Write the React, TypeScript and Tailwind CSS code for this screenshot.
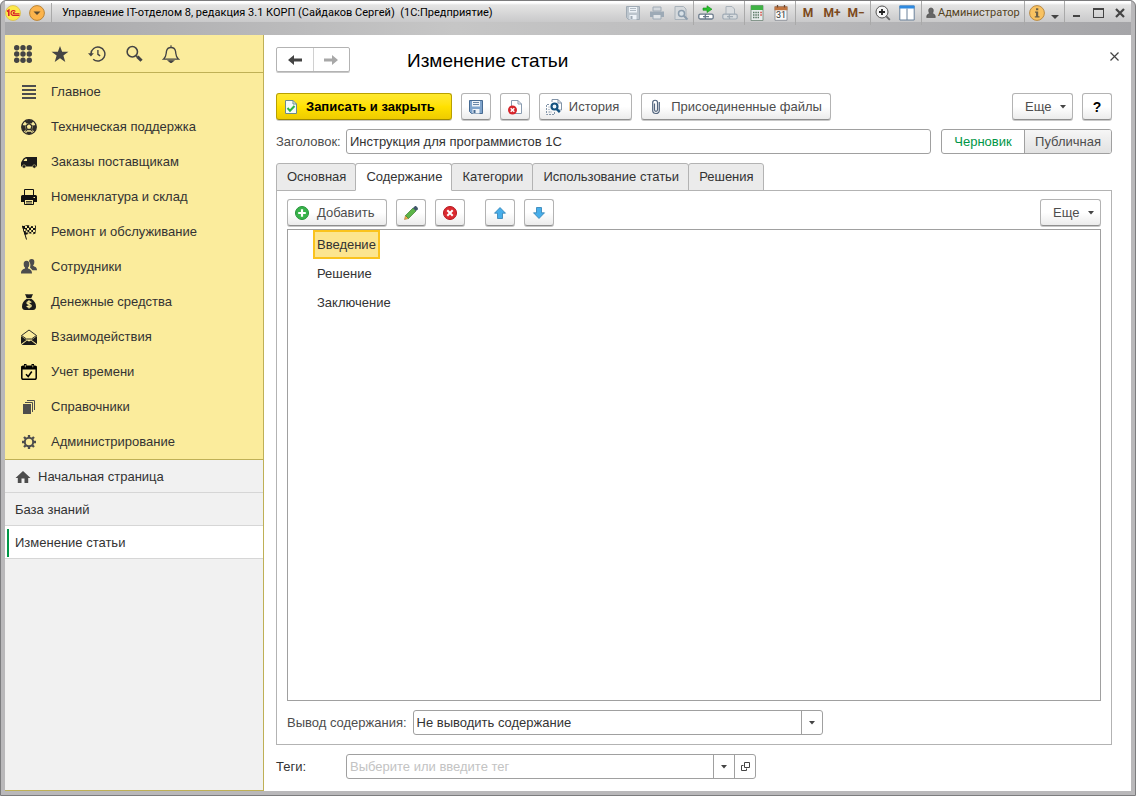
import { useState } from "react";
import clsx from "clsx";

const Svg = ({ children, size = 16, className = "" }: any) => (
  <svg
    width={size}
    height={size}
    viewBox="0 0 16 16"
    className={clsx("shrink-0", className)}
    aria-hidden="true"
  >
    {children}
  </svg>
);

/* sidebar icons */
const MenuIcon = () => (
  <Svg>
    <path d="M1 1h14v2H1zM1 5h14v2H1zM1 9h14v2H1zM1 13h14v2H1z" fill="#4d4d4d" />
  </Svg>
);
const BallIcon = () => (
  <Svg>
    <circle cx="8" cy="8" r="7.3" fill="#f6e89a" stroke="#2e2b28" strokeWidth="1.3" />
    <path d="M8 .8a7.2 7.2 0 0 1 4.3 1.5L10.500 4.600h-5L3.700 2.300A7.200 7.200 0 0 1 8 .8z" fill="#2e2b28" />
    <path d="M1 6l3 .5 1 4-2.500 2.300C1 11 .5 9 1 6zM15 6l-3 .5-1 4 2.500 2.300c1.500-1.800 2-3.800 1.500-6.800zM6 12.800h4l1 1.800c-2 1-4 1-6 0z" fill="#2e2b28" />
    <path d="M8 4.500l3 2.300-1.100 3.700H6.100L5 6.800z" fill="#fbec9c" stroke="#2e2b28" strokeWidth="1.3" />
    <path d="M6 10.500l-1.500 2M10 10.500l1.500 2" stroke="#2e2b28" strokeWidth="1.2" />
  </Svg>
);
const TruckIcon = () => (
  <Svg>
    <path d="M0 12V8.500L2.500 4.500 5 3h11v9.500H0z" fill="#1b1b1b" />
    <path d="M2.500 7L4 4.800h2V7z" fill="#fbec9c" />
    <circle cx="3" cy="12.500" r="1.700" fill="#1b1b1b" stroke="#fbec9c" strokeWidth=".5" />
    <circle cx="13.300" cy="12.500" r="1.700" fill="#1b1b1b" stroke="#fbec9c" strokeWidth=".5" />
  </Svg>
);
const PrinterIcon = () => (
  <Svg>
    <path d="M0 7.500Q0 6 1.500 6h13Q16 6 16 7.500V13h-3v-2H3v2H0z" fill="#111" />
    <path d="M3.500 6.500v-6h9v6M3.500 10.500v5h9v-5" fill="none" stroke="#111" />
    <path d="M5 12.500h6M5 14h6" stroke="#111" strokeWidth=".8" />
    <path d="M12.500 8.500H14" stroke="#fbec9c" />
  </Svg>
);
const FlagIcon = () => (
  <Svg>
    <path d="M1.500 2l4 13.500" stroke="#111" />
    <path d="M1 1.500c3 1.500 4.500-1 7 0s4 1 7 0l-.5 8c-3 1.500-4 0-6 0s-3 2-5 1z" fill="#111" />
    <path
      d="M4 2h2v2H4zM8 1.500h2v2H8zM12 2h2v2h-2zM6 4h2v2H6zM10 4h2v2h-2zM3 5h1.500v2H3zM4.800 6.500H6.500v2H4.800zM8.300 6h2v2h-2zM12 6h2v2h-2zM6.700 8.300h1.600v1.500H6.700zM10.300 8h2v2h-2z"
      fill="#fbec9c"
    />
  </Svg>
);
const PeopleIcon = () => (
  <Svg>
    <path d="M10.500 0C13 0 13.500 1.500 13.300 3.500c0 1.500-.8 2.500-1.300 3.200 1.500 1 4 1 4 4.500h-4.500L9 8.500C9.800 6 9.500 4 8 2.200 8.300.8 9 0 10.500 0z" fill="#4d4d4d" />
    <path d="M5.500 1.800c2 0 3 1.200 2.800 3.400 0 1.800-.7 2.800-1.300 3.400v.8c2 .8 4 1.200 4 5.100H0c0-3.900 2-4.300 4-5.100v-.8C3.300 8 2.700 7 2.700 5.200 2.500 3 3.500 1.800 5.500 1.800z" fill="#4d4d4d" />
  </Svg>
);
const MoneyIcon = () => (
  <Svg>
    <path d="M4 0c2 1 2.500-.5 4 .5C9.500-.5 10 1 12 0l-1.700 4H5.700zM5.700 4.800h4.600C13 6.500 15 9 15 12.500c0 2.200-1 3.500-3 3.500H4c-2 0-3-1.300-3-3.500C1 9 3 6.500 5.700 4.800z" fill="#1b1b1b" />
    <path d="M10.300 8.500C8.500 7 5.800 7.700 6 9.200c.2 1.500 4.200.9 4.200 2.600 0 1.700-3 1.700-4.500.2M8 6.300v8.200" stroke="#fbec9c" fill="none" strokeWidth="1.300" />
  </Svg>
);
const MailIcon = () => (
  <Svg>
    <path d="M.5 6.500L8 1l7.500 5.500L10.500 10h-5z" fill="none" stroke="#1b1b1b" strokeWidth=".9" />
    <path d="M0 7l5.500 4L0 15zM16 7l-5.500 4 5.500 4zM.5 16L6 11.500l2 1 2-1 5.500 4.500z" fill="#1b1b1b" />
  </Svg>
);
const TimeIcon = () => (
  <Svg>
    <rect x=".8" y="2.300" width="14.400" height="13" rx="1.200" fill="none" stroke="#000" strokeWidth="1.500" />
    <path d="M.5 2h15v3.500H.5zM3 0h2.500v3H3zM10.500 0H13v3h-2.500z" fill="#000" />
    <path d="M4.300 1v2.300M11.800 1v2.300" stroke="#fbec9c" strokeWidth=".7" />
    <path d="M5 10.200l2.200 2.300 3.600-5" fill="none" stroke="#000" strokeWidth="1.500" />
  </Svg>
);
const BooksIcon = () => (
  <Svg>
    <path d="M2 5h8v10H2z" fill="#4d4d4d" />
    <path d="M4 3.500h7.500V13M6 1.500h7.500V11" fill="none" stroke="#4d4d4d" />
  </Svg>
);
const GearIcon = () => (
  <Svg>
    <circle cx="8" cy="8" r="4.200" fill="none" stroke="#4d4d4d" strokeWidth="2" />
    <path
      d="M8 1v2.500M8 12.500V15M1 8h2.500M12.500 8H15M3 3l1.800 1.800M11.200 11.200L13 13M13 3l-1.800 1.800M4.800 11.200L3 13"
      stroke="#4d4d4d"
      strokeWidth="2.300"
    />
  </Svg>
);
const HomeIcon = () => (
  <Svg>
    <path d="M8 2L.5 9h2.300v5H6.500V9.500h3V14h3.700V9h2.300z" fill="#4d4d4d" />
  </Svg>
);

/* panel icons */
const dots = [2.4, 8, 13.6];

const GridIcon = () => (
  <Svg size={18}>
    {dots.map((y) => dots.map((x) => <circle key={`${x}-${y}`} cx={x} cy={y} r="2.400" fill="#444" />))}
  </Svg>
);
const StarIcon = () => (
  <Svg size={18}>
    <path d="M8 .8l1.900 5.200h5.600L11 9.400l1.700 5.600L8 11.700 3.300 15 5 9.400.5 6h5.600z" fill="#444" />
  </Svg>
);
const HistoryIcon = () => (
  <Svg size={18}>
    <path d="M2.600 8a6.200 6.200 0 1 1 2 4.600" fill="none" stroke="#444" strokeWidth="1.300" />
    <path d="M0 7.300h5.200L2.600 10.300z" fill="#444" />
    <path d="M8.800 4.500v3.800l2 1.400" fill="none" stroke="#444" strokeWidth="1.200" />
  </Svg>
);
const SearchIcon = () => (
  <Svg size={18}>
    <circle cx="6.500" cy="6" r="4.600" fill="none" stroke="#444" strokeWidth="1.400" />
    <path d="M10 9.500l1 1" stroke="#444" strokeWidth="1.500" />
    <path d="M11 10.300l3.700 3.700" stroke="#444" strokeWidth="2.800" />
  </Svg>
);
const BellIcon = () => (
  <Svg size={18}>
    <path d="M1.500 12.500C4 10.500 3.500 8 4 5.500 4.400 3.300 5.800 2.200 8 2.200s3.600 1.100 4 3.300c.5 2.500 0 5 2.500 7z" fill="none" stroke="#444" strokeWidth="1.200" />
    <path d="M8 .3v2M5.800 14h4.400L8 15.800z" fill="#444" stroke="#444" />
  </Svg>
);

const Arrow = ({ left, color }: any) => (
  <Svg>
    {left ? (
      <path d="M1 8l6-5v3.500h8v3H7V13z" fill={color} />
    ) : (
      <path d="M15 8L9 3v3.500H1v3h8V13z" fill={color} />
    )}
  </Svg>
);
const Caret = () => (
  <svg width="6" height="4" viewBox="0 0 6 4" className="shrink-0" aria-hidden="true">
    <path d="M0 0h6L3 3.500z" fill="#444" />
  </svg>
);

/* command bar icons */
const SaveCloseIcon = () => (
  <Svg>
    <path d="M2.500 1.500H10L13.500 5v9.500h-11z" fill="#f4fbf8" stroke="#6b8b8e" />
    <path d="M10 1.500V5h3.500" fill="none" stroke="#6b8b8e" />
    <path d="M4.500 9l2.500 2.800L11.500 7" fill="none" stroke="#2fb344" strokeWidth="2" />
  </Svg>
);
const FloppyIcon = ({ dark = "#466a92", fill = "#7fa4cc" }: any) => (
  <Svg>
    <path d="M1.500 1.500h13v13h-11l-2-2z" fill={fill} stroke={dark} />
    <path d="M4 2h8v5.500H4zM4.500 10h7v4.500h-7z" fill="#eef3f8" />
    <path d="M5 3.500h6M5 5.500h6" stroke={dark} strokeWidth=".8" />
    <path d="M5.500 11h2v3h-2z" fill={dark} />
  </Svg>
);
const DocDeleteIcon = () => (
  <Svg>
    <path d="M4.500 1.500H11L14.500 5v9.500h-10z" fill="#fff" stroke="#8a9cb0" />
    <path d="M11 1.500V5h3.500" fill="none" stroke="#8a9cb0" />
    <circle cx="5.500" cy="11" r="4.500" fill="#d6252b" />
    <path d="M3.700 9.200l3.600 3.600M7.300 9.200l-3.600 3.600" stroke="#fff" strokeWidth="1.500" />
  </Svg>
);
const DocSearchIcon = () => (
  <Svg>
    <path d="M6 3V.5h6L15.500 4v7H13M12 .5V4h3.500" fill="none" stroke="#8294a8" />
    <path d="M3 5.500H.5v10h8V13M2.500 8h1M2.500 10.500h1M2.500 13H6" fill="none" stroke="#8294a8" strokeDasharray="2 1" />
    <circle cx="8.500" cy="7.500" r="3" fill="#eef6fb" stroke="#14527f" strokeWidth="2.200" />
    <path d="M10.500 9.800l3.300 3.300" stroke="#14527f" strokeWidth="2.400" />
  </Svg>
);
const ClipIcon = () => (
  <Svg>
    <path
      d="M6.500 4.500v6.300c0 2 3 2 3 0V3.500c0-3-4.800-3-4.800 0v8c0 4 6.600 4 6.600 0V3"
      fill="none"
      stroke="#52657e"
      strokeWidth="1.200"
    />
  </Svg>
);
const AddIcon = () => (
  <Svg>
    <circle cx="8" cy="8" r="6.500" fill="#38b34a" stroke="#249238" />
    <path d="M8 4.200v7.600M4.200 8h7.600" stroke="#fff" strokeWidth="2.200" />
  </Svg>
);
const PencilIcon = () => (
  <Svg>
    <path d="M1.500 14.500l1-4 3 3z" fill="#f3b24a" stroke="#a5762f" strokeWidth=".6" />
    <path d="M2.500 10.500l7.500-7.500 3 3-7.500 7.500z" fill="#5cb548" stroke="#3f7c34" strokeWidth=".7" />
    <path d="M10 3l1.800-1.800c1-.8 3.800 1.800 3 3L13 6z" fill="#40566b" />
  </Svg>
);
const DeleteIcon = () => (
  <Svg>
    <circle cx="8" cy="8" r="6.500" fill="#dc2a30" stroke="#b3151d" />
    <path d="M5.300 5.300l5.400 5.400M10.700 5.300l-5.400 5.400" stroke="#fff" strokeWidth="2" />
  </Svg>
);
const UpIcon = () => (
  <Svg>
    <path d="M8 2.500l5.500 5.700h-3v5.300h-5V8.200h-3z" fill="#47aeea" stroke="#2d7fb3" strokeWidth=".8" />
  </Svg>
);
const DownIcon = () => (
  <Svg>
    <path d="M8 13.500L2.500 7.800h3V2.500h5v5.300h3z" fill="#47aeea" stroke="#2d7fb3" strokeWidth=".8" />
  </Svg>
);
const OpenIcon = () => (
  <svg width="9" height="9" viewBox="0 0 9 9" aria-hidden="true">
    <path d="M3.500.5h5v5h-5zM2.500 3.500h-2v5h5v-2" fill="none" stroke="#444" />
  </svg>
);

/* title bar icons */
const LogoIcon = () => (
  <svg width="16" height="16" viewBox="0 0 16 16" role="img" aria-label="1С">
    <circle cx="8" cy="8" r="7.500" fill="#fde94a" stroke="#d9bb4c" strokeWidth=".8" />
    <path d="M2 6.500l1.800-1.300V11" fill="none" stroke="#d8202a" strokeWidth="1.600" />
    <path d="M10.300 6.500C9.500 5 6 5 6 8c0 2.300 2 2.500 3.500 2.500h5M9.700 7.500c-1.500-.8-2 1.300-.2 1.300h5" fill="none" stroke="#d8202a" strokeWidth="1.200" />
  </svg>
);
const DropIcon = () => (
  <Svg>
    <circle cx="8" cy="8" r="7.400" fill="#fcb44c" stroke="#b98437" />
    <path d="M4.500 6.500h7L8 10z" fill="#5a4a30" />
  </Svg>
);
const GrayPrinter = () => (
  <Svg>
    <path d="M4 2h8v4H4z" fill="#d4d9de" stroke="#a0abb5" />
    <path d="M1 6.500h14v5.500H1z" fill="#9daab6" />
    <path d="M4 9.500h8V14H4z" fill="#dfe3e6" stroke="#9daab6" />
  </Svg>
);
const GrayPreview = () => (
  <Svg>
    <path d="M2 1.500h8.500L13 4v10.500H2z" fill="#d6dadd" stroke="#a9b2ba" />
    <circle cx="8.500" cy="8.500" r="3" fill="#d9e2e8" stroke="#8c9dad" strokeWidth="1.500" />
    <path d="M10.800 10.800l3.700 3.700" stroke="#8c9dad" strokeWidth="2" />
  </Svg>
);
const LinkIcon = () => (
  <Svg>
    <path d="M5 3h4V.8L14 4.200 9 7.600V5.300H5z" fill="#27c22d" stroke="#178a1c" strokeWidth=".6" />
    <rect x=".8" y="9.200" width="8" height="4.800" rx="1.500" fill="#fff" stroke="#68788a" strokeWidth="1.300" />
    <rect x="7.200" y="9.200" width="8" height="4.800" rx="1.500" fill="#fff" stroke="#68788a" strokeWidth="1.300" />
    <path d="M5 11.600h6" stroke="#68788a" strokeWidth="1.300" />
  </Svg>
);
const GrayLink = () => (
  <Svg>
    <path d="M4 1.500h6L12.500 4v6H4z" fill="#dadde0" stroke="#a9b2ba" />
    <rect x=".8" y="9.200" width="8" height="4.800" rx="1.500" fill="#d8dcdf" stroke="#a0abb5" strokeWidth="1.200" />
    <rect x="7.200" y="9.200" width="8" height="4.800" rx="1.500" fill="#d8dcdf" stroke="#a0abb5" strokeWidth="1.200" />
    <path d="M5 11.600h6" stroke="#a0abb5" strokeWidth="1.200" />
  </Svg>
);
const CalcIcon = () => (
  <Svg>
    <path d="M2 .5h12v15H2z" fill="#e8ecec" stroke="#6f8577" strokeWidth=".8" />
    <path d="M2 .5h12V5H2z" fill="#3fb244" />
    <path d="M4 7.500h6M4 10h6M4 12.500h6" stroke="#5b7a66" strokeWidth="1.300" strokeDasharray="1.500 .8" />
    <path d="M11.300 7.500h1.500M11.300 10h1.500" stroke="#d5453c" strokeWidth="1.300" />
  </Svg>
);
const CalendarIcon = () => (
  <Svg>
    <path d="M2 1.500h12v13.800H2z" fill="#f7f7f7" stroke="#8a8f96" strokeWidth=".9" />
    <path d="M1.500 1.500h13v3.800h-13z" fill="#c0743f" />
    <path d="M4.500 0v2.500M11.500 0v2.500" stroke="#6b4630" strokeWidth="1.300" />
    <text x="8" y="13" textAnchor="middle" fontSize="9" fill="#333">
      31
    </text>
  </Svg>
);
const ZoomInIcon = () => (
  <Svg>
    <circle cx="7" cy="7" r="6" fill="#f6f6f6" stroke="#555" />
    <path d="M7 4v6M4 7h6" stroke="#222" strokeWidth="1.800" />
    <path d="M11.300 11.300l3.500 3.500" stroke="#666" strokeWidth="1.800" />
  </Svg>
);
const ColumnsIcon = () => (
  <Svg>
    <path d="M.8 1h14.400v14H.8z" fill="#fff" stroke="#69809a" />
    <path d="M.5.5h15v3H.5z" fill="#2f8ae0" />
    <path d="M8 3.500V15" stroke="#69809a" />
  </Svg>
);
const UserIcon = () => (
  <svg width="10" height="12" viewBox="0 0 10 12" className="shrink-0" aria-hidden="true">
    <path d="M5 1c1.600 0 2.300 1 2.300 2.500S6.700 6 6.300 6.500C8 7 9.300 7.500 9.300 10.500H.7C.7 7.500 2 7 3.700 6.500 3.300 6 2.700 5 2.700 3.500S3.400 1 5 1z" fill="#666" stroke="#444" strokeWidth=".6" />
  </svg>
);
const InfoIcon = () => (
  <Svg>
    <circle cx="8" cy="8" r="7.400" fill="#f8c261" stroke="#b98b45" />
    <path d="M7 3.300h2.300v2H7zM6 6.500h3.200v4.700h1.300v1.300H5.800v-1.300H7V7.700H6z" fill="#6c6047" />
  </Svg>
);

const sections = [
  { title: "Главное", icon: MenuIcon },
  { title: "Техническая поддержка", icon: BallIcon },
  { title: "Заказы поставщикам", icon: TruckIcon },
  { title: "Номенклатура и склад", icon: PrinterIcon },
  { title: "Ремонт и обслуживание", icon: FlagIcon },
  { title: "Сотрудники", icon: PeopleIcon },
  { title: "Денежные средства", icon: MoneyIcon },
  { title: "Взаимодействия", icon: MailIcon },
  { title: "Учет времени", icon: TimeIcon },
  { title: "Справочники", icon: BooksIcon },
  { title: "Администрирование", icon: GearIcon },
];

const quickActions = [
  { title: "Меню функций", icon: GridIcon },
  { title: "Избранное", icon: StarIcon },
  { title: "История", icon: HistoryIcon },
  { title: "Поиск", icon: SearchIcon },
  { title: "Оповещения", icon: BellIcon },
];

const tabs = ["Основная", "Содержание", "Категории", "Использование статьи", "Решения"];
const chapters = ["Введение", "Решение", "Заключение"];

const Button = ({ children, primary, className = "", ...rest }: any) => (
  <button
    type="button"
    className={clsx(
      "flex h-[27px] shrink-0 items-center rounded-[3px] border bg-linear-to-b shadow-[0_1px_0_#c9c9c9]",
      primary
        ? "border-[#b8a000] border-b-[#a08a00] from-[#ffe92e] via-[#ffe100] to-[#eecb00] font-bold text-black"
        : "border-[#b3b3b3] border-b-[#8f8f8f] from-white from-50% to-[#ececec] text-[#4d4d4d]",
      className
    )}
    {...rest}
  >
    {children}
  </button>
);

const BarButton = ({ title, children }: any) => (
  <button type="button" aria-label={title} className="flex h-6 w-6 items-center justify-center">
    {children}
  </button>
);

const BarGroup = ({ children }: any) => (
  <div className="flex h-6 items-center border-l border-[#a9a9a9] pr-0.5">{children}</div>
);

const TitleBar = () => (
  <header className="flex h-[34px] items-start justify-between bg-[linear-gradient(to_bottom,#fff_0,#fff_2px,#e4e4e4_4px,#c9c9ca_21px,transparent_21px),linear-gradient(to_right,#a7a7aa,#c6c6c6_40%,#b9b9bb_70%,#a5a5a8)]">
    <div className="flex h-6 items-center">
      <div className="flex items-center gap-2">
        <LogoIcon />
        <button type="button" aria-label="Главное меню">
          <DropIcon />
        </button>
      </div>
      <h1 className="ml-1.5 border-l border-[#a9a9a9] pl-2.5 font-['Roboto',sans-serif] text-[11px] leading-5 whitespace-pre text-black">
        {"Управление IT-отделом 8, редакция 3.1 КОРП (Сайдаков Сергей)  (1С:Предприятие)"}
      </h1>
    </div>
    <div className="flex shrink-0 items-center font-['Roboto',sans-serif] text-[11px]">
      <div className="flex">
        <BarButton title="Сохранить">
          <FloppyIcon dark="#a0abb5" fill="#bcc5cd" />
        </BarButton>
        <BarButton title="Печать">
          <GrayPrinter />
        </BarButton>
        <BarButton title="Просмотр">
          <GrayPreview />
        </BarButton>
      </div>
      <BarGroup>
        <BarButton title="Перейти по ссылке">
          <LinkIcon />
        </BarButton>
        <BarButton title="Получить ссылку">
          <GrayLink />
        </BarButton>
      </BarGroup>
      <BarGroup>
        <BarButton title="Калькулятор">
          <CalcIcon />
        </BarButton>
        <BarButton title="Календарь">
          <CalendarIcon />
        </BarButton>
      </BarGroup>
      <BarGroup>
        {["M", "M+", "M−"].map((m) => (
          <button key={m} type="button" className="h-6 w-6 text-center text-[12px] font-bold text-[#7d4a20]">
            {m}
          </button>
        ))}
      </BarGroup>
      <BarGroup>
        <BarButton title="Увеличить">
          <ZoomInIcon />
        </BarButton>
        <BarButton title="Окна">
          <ColumnsIcon />
        </BarButton>
      </BarGroup>
      <BarGroup>
        <button type="button" className="flex h-6 w-[100px] items-center gap-0.5 pl-1 text-[#54431f]">
          <UserIcon />
          Администратор
        </button>
      </BarGroup>
      <BarGroup>
        <button type="button" aria-label="Информация" className="flex h-6 w-[37px] items-center gap-1.5 pl-1">
          <InfoIcon />
          <svg width="8" height="4" viewBox="0 0 8 4" className="mt-2" aria-hidden="true">
            <path d="M0 0h8L4 4z" fill="#444" />
          </svg>
        </button>
      </BarGroup>
      <div className="flex h-6 items-center border-l border-[#a9a9a9]">
        <button type="button" aria-label="Свернуть" className="flex h-6 w-[22px] items-center justify-center">
          <span className="mt-1.5 h-0.5 w-[7px] bg-[#444]" />
        </button>
        <button type="button" aria-label="Развернуть" className="flex h-6 w-[22px] items-center justify-center">
          <span className="h-2.5 w-[11px] border border-t-2 border-[#444]" />
        </button>
        <button type="button" aria-label="Закрыть" className="flex h-6 w-[22px] items-center justify-center">
          <svg width="10" height="10" viewBox="0 0 10 10" aria-hidden="true">
            <path d="M1 1l8 8M9 1L1 9" stroke="#444" strokeWidth="2.200" />
          </svg>
        </button>
      </div>
    </div>
  </header>
);

const Sidebar = () => (
  <aside className="flex w-[259px] shrink-0 flex-col border-r border-b border-[#bfb056] bg-[#f1f1f1] text-[#333]">
    <div className="border-b border-[#bfb056] bg-[#fbec9c]">
      <div className="flex h-[38px] items-center gap-[19px] border-b border-[#bfb056] pl-[9px]">
        {quickActions.map(({ title, icon: Icon }) => (
          <button key={title} type="button" aria-label={title}>
            <Icon />
          </button>
        ))}
      </div>
      <nav className="pt-px">
        {sections.map(({ title, icon: Icon }) => (
          <a key={title} href="#" className="flex h-[35px] items-center gap-3.5 pl-4">
            <Icon />
            {title}
          </a>
        ))}
      </nav>
    </div>
    <nav>
      <a href="#" className="flex h-[33px] items-center gap-[7px] border-b border-[#d6d6d6] pt-0.5 pl-2.5">
        <HomeIcon />
        Начальная страница
      </a>
      <a href="#" className="flex h-[33px] items-center border-b border-[#d6d6d6] pt-0.5 pl-2.5">
        База знаний
      </a>
      <a href="#" className="flex h-[33px] items-center gap-1.5 border-b border-[#d6d6d6] bg-white pt-0.5 pl-0.5">
        <span className="h-7 w-0.5 bg-[#009646]" />
        Изменение статьи
      </a>
    </nav>
  </aside>
);

const Contents = () => {
  const [selected, setSelected] = useState("Введение");

  return (
    <section className="flex flex-1 flex-col border border-[#b3b3b3] px-2.5 pt-2 pb-[9px]">
      <div className="flex gap-[9px]">
        <Button className="gap-[7px] pr-3 pl-1.5">
          <AddIcon />
          Добавить
        </Button>
        <Button aria-label="Изменить" className="w-[30px] justify-center">
          <PencilIcon />
        </Button>
        <Button aria-label="Удалить" className="w-[30px] justify-center">
          <DeleteIcon />
        </Button>
        <Button aria-label="Вверх" className="ml-[11px] w-[30px] justify-center">
          <UpIcon />
        </Button>
        <Button aria-label="Вниз" className="w-[30px] justify-center">
          <DownIcon />
        </Button>
        <Button className="ml-auto w-[61px] justify-between pr-1.5 pl-3">
          Еще
          <Caret />
        </Button>
      </div>

      <ul className="mt-[3px] flex-1 border border-[#a0a0a0] pl-[25px]">
        {chapters.map((chapter) => (
          <li key={chapter}>
            <button
              type="button"
              onClick={() => setSelected(chapter)}
              className={clsx(
                "block h-[29px] border-2 px-0.5",
                chapter === selected ? "border-[#fac31e] bg-[#fce58f]" : "border-transparent"
              )}
            >
              {chapter}
            </button>
          </li>
        ))}
      </ul>

      <div className="mt-[9px] flex items-center gap-1.5">
        <label htmlFor="output" className="text-[#4d4d4d]">
          Вывод содержания:
        </label>
        <div className="relative w-[410px]">
          <select
            id="output"
            className="block h-[25px] w-full appearance-none rounded-[3px] border border-[#a0a0a0] bg-white px-[3px]"
          >
            <option>Не выводить содержание</option>
          </select>
          <span className="pointer-events-none absolute inset-y-0 right-0 flex w-[22px] items-center justify-center border-l border-[#a0a0a0]">
            <Caret />
          </span>
        </div>
      </div>
    </section>
  );
};

const ArticleForm = () => {
  const [tab, setTab] = useState("Содержание");

  return (
    <main className="flex min-w-0 flex-1 flex-col bg-white pt-3 pr-[19px] pb-3 pl-3">
      <div className="flex h-[25px] items-center">
        <div className="flex h-[25px] w-[74px] rounded-[2px] border border-[#b3b3b3] shadow-[0_1px_0_#c9c9c9]">
          <button type="button" aria-label="Назад" className="flex flex-1 items-center justify-center border-r border-[#d0d0d0]">
            <Arrow left color="#444" />
          </button>
          <button type="button" aria-label="Вперед" className="flex flex-1 items-center justify-center">
            <Arrow color="#a8a8a8" />
          </button>
        </div>
        <h2 className="ml-[57px] pt-0.5 text-[19px] text-black">Изменение статьи</h2>
        <button type="button" aria-label="Закрыть" className="-mr-[11px] mb-1.5 ml-auto p-1">
          <svg width="9" height="9" viewBox="0 0 9 9" aria-hidden="true">
            <path d="M.5.500l8 8M8.500.500l-8 8" stroke="#444" strokeWidth="1.200" />
          </svg>
        </button>
      </div>

      <div className="mt-[21px] flex gap-[9px]">
        <Button primary className="gap-[7px] pr-4 pl-1.5">
          <SaveCloseIcon />
          Записать и закрыть
        </Button>
        <Button aria-label="Записать" className="w-[30px] justify-center">
          <FloppyIcon />
        </Button>
        <Button aria-label="Пометить на удаление" className="w-[30px] justify-center">
          <DocDeleteIcon />
        </Button>
        <Button className="gap-[7px] pr-3 pl-1.5">
          <DocSearchIcon />
          История
        </Button>
        <Button className="gap-[7px] pr-2 pl-1.5">
          <ClipIcon />
          Присоединенные файлы
        </Button>
        <Button className="ml-auto w-[61px] justify-between pr-1.5 pl-3">
          Еще
          <Caret />
        </Button>
        <Button className="w-[30px] justify-center text-[14px] font-bold">
          <span className="text-black">?</span>
        </Button>
      </div>

      <div className="mt-[9px] flex items-center">
        <label htmlFor="title" className="w-[70px] shrink-0 text-[#4d4d4d]">
          Заголовок:
        </label>
        <input
          id="title"
          defaultValue="Инструкция для программистов 1С"
          className="h-[25px] min-w-0 flex-1 rounded-[3px] border border-[#a0a0a0] px-[3px]"
        />
        <div className="ml-2.5 flex h-[25px] w-[171px] overflow-hidden rounded-[3px] border border-[#a0a0a0]">
          <button type="button" aria-pressed="true" className="w-[82px] text-[#009646]">
            Черновик
          </button>
          <button
            type="button"
            aria-pressed="false"
            className="flex-1 border-l border-[#a0a0a0] bg-linear-to-b from-[#f6f6f6] to-[#e2e2e2] text-[#4d4d4d]"
          >
            Публичная
          </button>
        </div>
      </div>

      <div role="tablist" className="mt-[9px] flex">
        {tabs.map((name) => (
          <button
            key={name}
            type="button"
            role="tab"
            aria-selected={name === tab}
            onClick={() => setTab(name)}
            className={clsx(
              "-mr-px -mb-px h-7 rounded-t-[3px] border border-[#b3b3b3] pr-[9px] pl-2.5",
              name === tab ? "relative border-b-white bg-white" : "bg-[#ebebeb]"
            )}
          >
            {name}
          </button>
        ))}
      </div>
      <Contents />

      <div className="mt-[9px] flex items-center">
        <label htmlFor="tags" className="w-[70px] shrink-0">
          Теги:
        </label>
        <div className="flex h-[25px] w-[410px] rounded-[3px] border border-[#a0a0a0]">
          <input
            id="tags"
            placeholder="Выберите или введите тег"
            className="min-w-0 flex-1 px-[3px] placeholder:text-[#c3c3c3]"
          />
          <button type="button" aria-label="Выбрать" className="flex w-[21px] items-center justify-center border-l border-[#a0a0a0]">
            <Caret />
          </button>
          <button type="button" aria-label="Открыть" className="flex w-[21px] items-center justify-center border-l border-[#a0a0a0]">
            <OpenIcon />
          </button>
        </div>
      </div>
    </main>
  );
};

const App = () => {
  return (
    <div className="flex min-h-screen flex-col overflow-hidden rounded-t-[6px] border border-[#7c7c7e] bg-[#b9b8ba] px-1 pb-1 font-['Liberation_Sans',Arial,sans-serif] text-[13px] leading-5 text-[#333]">
      <TitleBar />
      <div className="flex flex-1">
        <Sidebar />
        <ArticleForm />
      </div>
    </div>
  );
};

export default App;
